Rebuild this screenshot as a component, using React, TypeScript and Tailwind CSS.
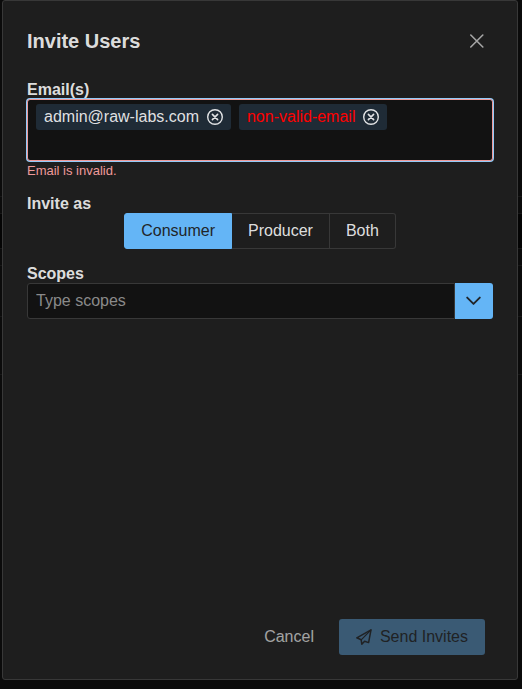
import { useState } from "react";

const TimesIcon = () => (
  <svg width="14" height="14" viewBox="0 0 14 14" fill="none" stroke="currentColor" strokeWidth="1.6" strokeLinecap="round" aria-hidden="true">
    <path d="M0.8 1L12.8 13M12.8 1L0.8 13" />
  </svg>
);

const TimesCircleIcon = () => (
  <svg width="16" height="16" viewBox="0 0 16 16" fill="none" stroke="currentColor" strokeLinecap="round" aria-hidden="true">
    <circle cx="8" cy="8" r="7.3" strokeWidth="1.4" />
    <path d="M5.4 5.4L10.6 10.6M10.6 5.4L5.4 10.6" strokeWidth="1.6" />
  </svg>
);

const ChevronDownIcon = () => (
  <svg width="16" height="16" viewBox="0 0 16 16" fill="none" stroke="currentColor" strokeWidth="1.9" strokeLinecap="round" strokeLinejoin="round" aria-hidden="true">
    <path d="M1.2 4.6L7.5 10.9L13.8 4.6" />
  </svg>
);

const SendIcon = () => (
  <svg width="16" height="16" viewBox="0 0 16 16" fill="none" stroke="currentColor" strokeWidth="1.5" strokeLinecap="round" strokeLinejoin="round" aria-hidden="true">
    <path d="M15 0.9L0.8 8.8L5.2 10.8L5.8 15.2L8.6 12.2L12.6 13.6L15 0.9Z" />
    <path d="M15 0.9L5.2 10.8" strokeWidth="1.2" />
  </svg>
);

const roles = ["Consumer", "Producer", "Both"];

const App = () => {
  const [role, setRole] = useState("Consumer");
  const [emails, setEmails] = useState([
    { value: "admin@raw-labs.com", valid: true },
    { value: "non-valid-email", valid: false },
  ]);

  const removeEmail = (value: string) =>
    setEmails(emails.filter((email) => email.value !== value));

  return (
    <div className="relative isolate flex min-h-screen bg-[#0b0b0b] pr-1 pb-[9px] pl-[2px] font-['Liberation_Sans',Arial,sans-serif] text-base leading-[18px] text-white/87">
      {/* Dimmed page rows behind the dialog */}
      <div className="absolute inset-0 -z-10 flex flex-col pt-[196px]" aria-hidden="true">
        <div className="h-[17px] border-t border-[#171717]" />
        <div className="h-[35px] border-t border-[#171717] bg-[#040404]" />
        <div className="h-[17px] border-t border-[#171717]" />
        <div className="h-[51px] border-t border-[#171717]" />
        <div className="h-[58px] border-t border-[#171717]" />
        <div className="border-t border-[#171717]" />
      </div>

      <div
        role="dialog"
        aria-labelledby="dialog-title"
        className="flex flex-1 flex-col rounded-[3px] border border-[#383838] bg-[#1e1e1e]"
      >
        <header className="flex items-center justify-between p-6">
          <h1 id="dialog-title" className="text-xl leading-[22px] font-bold">
            Invite Users
          </h1>
          <button type="button" aria-label="Close" className="flex size-8 items-center justify-center rounded-full text-white/60">
            <TimesIcon />
          </button>
        </header>

        <form id="invite-form" className="flex flex-1 flex-col px-6">
          <label htmlFor="emails" className="font-bold">
            Email(s)
          </label>
          <div className="flex min-h-[62px] flex-wrap content-start gap-x-2 rounded-[3px] border border-[#ef9a9a] bg-[#121212] px-2 py-1 shadow-[0_0_0_1px_#93cbf9]">
            {emails.map((email) => (
              <span key={email.value} className="flex items-center gap-2 rounded-[3px] bg-[#1f2b36] px-2 py-1">
                <span className={email.valid ? "" : "text-[#ff0000]"}>{email.value}</span>
                <button type="button" aria-label={`Remove ${email.value}`} onClick={() => removeEmail(email.value)}>
                  <TimesCircleIcon />
                </button>
              </span>
            ))}
            <input id="emails" type="text" className="h-[26px] min-w-32 flex-1 bg-transparent outline-none" />
          </div>
          <small className="text-[13px] leading-5 text-[#ef9a9a]">Email is invalid.</small>

          <span id="role-label" className="mt-[14px] font-bold">
            Invite as
          </span>
          <div role="group" aria-labelledby="role-label" className="flex justify-center self-center">
            {roles.map((item) => (
              <button
                key={item}
                type="button"
                aria-pressed={role === item}
                onClick={() => setRole(item)}
                className={`h-9 border-y border-r px-4 first:rounded-l-[3px] first:border-l last:rounded-r-[3px] ${
                  role === item ? "border-[#64b5f6] bg-[#64b5f6] text-[#212529]" : "border-[#383838] bg-[#1e1e1e]"
                }`}
              >
                {item}
              </button>
            ))}
          </div>

          <label htmlFor="scopes" className="mt-4 font-bold">
            Scopes
          </label>
          <div className="flex h-9">
            <input
              id="scopes"
              type="text"
              placeholder="Type scopes"
              className="min-w-0 flex-1 rounded-l-[3px] border border-[#383838] bg-[#121212] px-2 outline-none placeholder:text-[#8a8a8a]"
            />
            <button type="button" aria-label="Show scopes" className="flex w-[38px] items-center justify-center rounded-r-[3px] bg-[#64b5f6] text-[#212529]">
              <ChevronDownIcon />
            </button>
          </div>
        </form>

        <footer className="flex justify-end gap-2 px-8 pt-6 pb-6">
          <button type="button" className="h-9 px-[17px] text-white/60">
            Cancel
          </button>
          <button type="submit" form="invite-form" disabled className="flex h-9 items-center gap-2 rounded-[3px] bg-[#3a5a74] px-[17px] text-[#202224]">
            <SendIcon />
            Send Invites
          </button>
        </footer>
      </div>
    </div>
  );
};

export default App;
